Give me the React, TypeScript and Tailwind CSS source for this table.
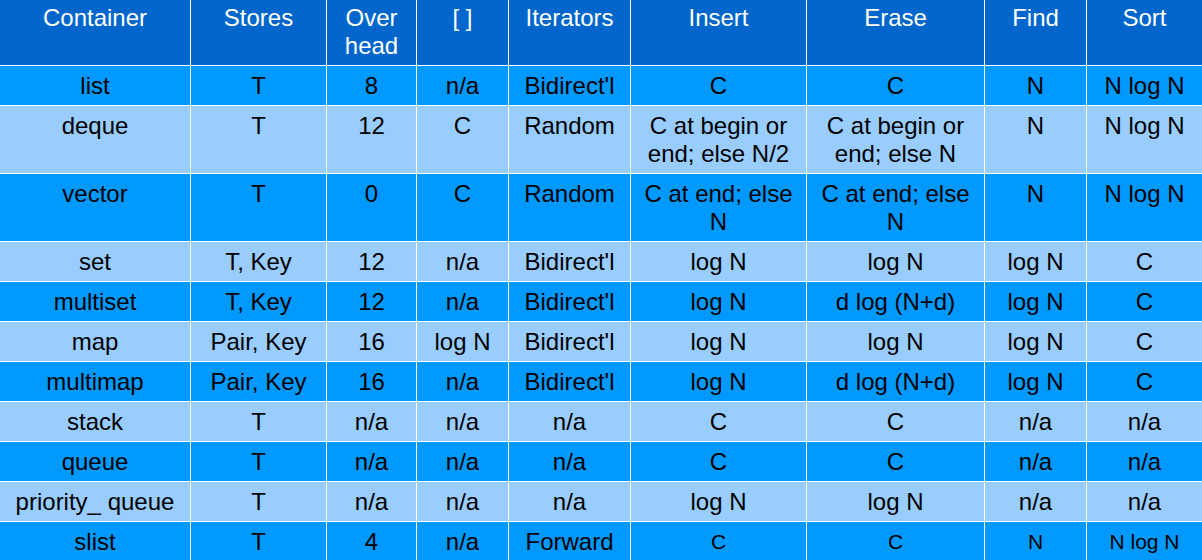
const headers: string[][] = [
  ['Container'],
  ['Stores'],
  ['Over', 'head'],
  ['[ ]'],
  ['Iterators'],
  ['Insert'],
  ['Erase'],
  ['Find'],
  ['Sort'],
]

// each cell is a list of lines
const rows: string[][][] = [
  [['list'], ['T'], ['8'], ['n/a'], ["Bidirect'l"], ['C'], ['C'], ['N'], ['N log N']],
  [['deque'], ['T'], ['12'], ['C'], ['Random'], ['C at begin or', 'end; else N/2'], ['C at begin or', 'end; else N'], ['N'], ['N log N']],
  [['vector'], ['T'], ['0'], ['C'], ['Random'], ['C at end; else', 'N'], ['C at end; else', 'N'], ['N'], ['N log N']],
  [['set'], ['T, Key'], ['12'], ['n/a'], ["Bidirect'l"], ['log N'], ['log N'], ['log N'], ['C']],
  [['multiset'], ['T, Key'], ['12'], ['n/a'], ["Bidirect'l"], ['log N'], ['d log (N+d)'], ['log N'], ['C']],
  [['map'], ['Pair, Key'], ['16'], ['log N'], ["Bidirect'l"], ['log N'], ['log N'], ['log N'], ['C']],
  [['multimap'], ['Pair, Key'], ['16'], ['n/a'], ["Bidirect'l"], ['log N'], ['d log (N+d)'], ['log N'], ['C']],
  [['stack'], ['T'], ['n/a'], ['n/a'], ['n/a'], ['C'], ['C'], ['n/a'], ['n/a']],
  [['queue'], ['T'], ['n/a'], ['n/a'], ['n/a'], ['C'], ['C'], ['n/a'], ['n/a']],
  [['priority_ queue'], ['T'], ['n/a'], ['n/a'], ['n/a'], ['log N'], ['log N'], ['n/a'], ['n/a']],
  [['slist'], ['T'], ['4'], ['n/a'], ['Forward'], ['C'], ['C'], ['N'], ['N log N']],
]

function Lines({ lines }: { lines: string[] }) {
  return (
    <>
      {lines.map((l, i) => (
        <div key={i} className="whitespace-nowrap">{l}</div>
      ))}
    </>
  )
}

export default function App() {
  return (
    <div
      className="w-[1202px] h-[560px] overflow-hidden bg-white"
      style={{ fontFamily: '"Liberation Sans", Arial, sans-serif' }}
    >
      <div className="grid grid-cols-[190px_135px_89px_91px_121px_175px_177px_101px_115px] gap-px bg-white text-[24px] leading-[28px] text-center">
        {/* Header */}
        {headers.map((h, i) => (
          <div key={i} className="bg-[#0066cc] text-white pt-[4px] pb-[5px]">
            <Lines lines={h} />
          </div>
        ))}

        {/* Body */}
        {rows.map((row, r) =>
          row.map((cell, c) => {
            const isLast = r === rows.length - 1
            const small = isLast && c >= 5
            return (
              <div
                key={`${r}-${c}`}
                className={`${r % 2 === 0 ? 'bg-[#0099ff]' : 'bg-[#99ccff]'} text-black pt-[6px] pb-[5px] ${
                  small ? 'text-[21px]' : ''
                }`}
              >
                <Lines lines={cell} />
              </div>
            )
          })
        )}
      </div>
    </div>
  )
}
